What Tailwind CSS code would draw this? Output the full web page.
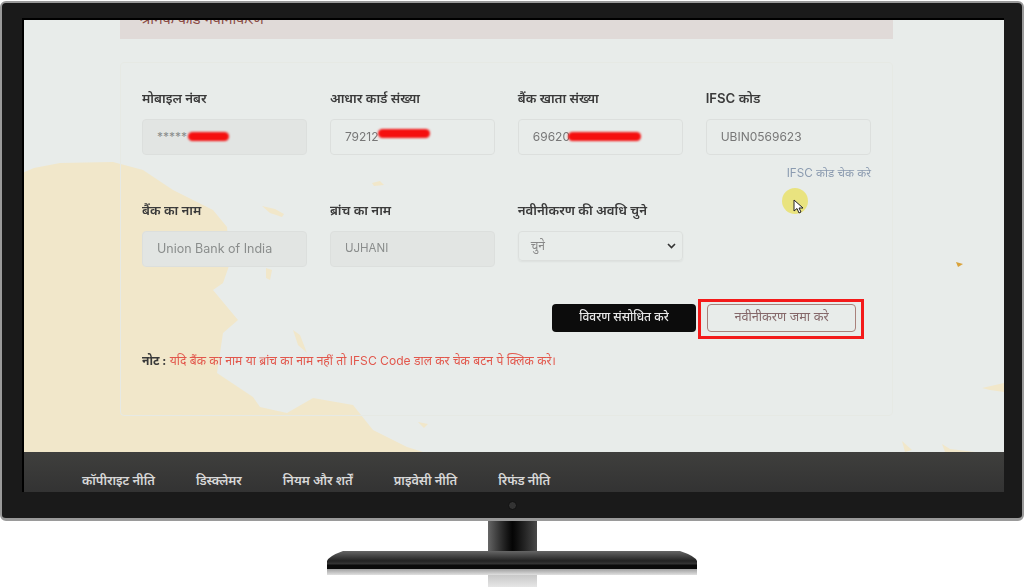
<!DOCTYPE html>
<html>
  <head>
    <meta charset="UTF-8" />
    <meta name="viewport" content="width=device-width, initial-scale=1.0" />
    <script src="https://cdn.jsdelivr.net/npm/@tailwindcss/browser@4"></script>
  </head>
  <body class="bg-white overflow-hidden font-['Inter','Noto_Sans_Devanagari','Noto_Sans',sans-serif]">
    <div class="w-[1024px] h-[587px] flex flex-col items-center">
      <!-- monitor -->
      <div class="w-full h-[520px] shrink-0 mt-px bg-[#1a1a1a] border-[2px] border-b-[3px] border-[#9a9a9a] rounded-[6px] pt-[15px] pl-[20px] pr-[19px] relative">
        <div class="relative w-[982px] h-[474px] overflow-hidden bg-[#e8ecea] border-t-[2px] border-l-[2px] border-black flex flex-col">
          <div class="absolute inset-0 flex flex-col blur-[0.4px]">
            <!-- map backdrop -->
            <svg class="absolute left-0 top-0" width="982" height="474" viewBox="24 20 982 474">
              <path fill="#f1e7ca" d="M22 173 L34 168 L60 163 L113 162 L143 170 L173 190 L213 210 L227 227 L230 263 L223 283 L213 290 L238 320 L223 333 L217 373 L253 397 L260 407 L287 413 L313 398 L353 405 L373 430 L407 447 L423 452 L22 452 Z" />
              <path fill="#f1e7ca" d="M262 206 L275 209 L284 214 L282 217 L270 213 Z M372 183 L380 181 L384 185 L374 186 Z M266 268 L272 270 L270 280 L266 278 Z M293 330 L300 335 L307 353 L298 345 Z M418 422 L428 424 L424 428 Z M902 441 L912 450 L905 452 Z M942 444 L945 452 L975 452 L950 449 Z M982 388 L1004 383 L1004 392 L990 390 Z" />
              <path fill="#d9a23a" d="M956 262 L963 264 L958 267 Z" />
            </svg>

            <div class="relative w-[773px] h-[19px] ml-[96px] shrink-0 bg-[#e0dad8] overflow-hidden">
              <p class="pl-[20px] -mt-[11px] text-[14.5px] leading-5 text-[#8a4a44]">श्रमिक कार्ड नवीनीकरण</p>
            </div>

            <!-- card -->
            <div class="relative w-[773px] h-[354px] ml-[96px] mt-[23px] shrink-0 border border-[#e6e9e4] rounded px-[21px] pt-[23px]">
              <div class="grid grid-cols-4 gap-x-[22.5px]">
                <div class="h-[112px]">
                  <label class="block h-[24px] text-[13.2px] leading-6 font-semibold text-[#3a3a3a]">मोबाइल नंबर</label>
                  <div class="relative mt-[9px] h-[36px] pl-[14px] flex items-center bg-[#e2e5e3] border border-[#dcdfdd] rounded text-[12px] text-[#8a8d8c]">
                    *****<span class="absolute left-[45px] top-[12px] w-[41px] h-[9px] rounded-full bg-[#f50f0f] blur-[1px]"></span>
                  </div>
                </div>
                <div>
                  <label class="block h-[24px] text-[13.2px] leading-6 font-semibold text-[#3a3a3a]">आधार कार्ड संख्या</label>
                  <div class="relative mt-[9px] h-[36px] pl-[14px] flex items-center border border-[#dcdfdd] rounded text-[12px] text-[#777]">
                    79212<span class="absolute left-[47px] top-[9px] w-[52px] h-[9px] rounded-full bg-[#f50f0f] blur-[1px]"></span>
                  </div>
                </div>
                <div>
                  <label class="block h-[24px] text-[13.2px] leading-6 font-semibold text-[#3a3a3a]">बैंक खाता संख्या</label>
                  <div class="relative mt-[9px] h-[36px] pl-[14px] flex items-center border border-[#dcdfdd] rounded text-[12px] text-[#777]">
                    69620<span class="absolute left-[49px] top-[12px] w-[73px] h-[9px] rounded-full bg-[#f50f0f] blur-[1px]"></span>
                  </div>
                </div>
                <div>
                  <label class="block h-[24px] text-[13.2px] leading-6 font-semibold text-[#3a3a3a]">IFSC कोड</label>
                  <div class="mt-[9px] h-[36px] pl-[14px] flex items-center border border-[#dcdfdd] rounded text-[12px] text-[#777]">UBIN0569623</div>
                  <p class="mt-[10px] text-right text-[11.7px] leading-4 text-[#8b9bb0]">IFSC कोड चेक करे</p>
                </div>

                <div>
                  <label class="block h-[24px] text-[13.2px] leading-6 font-semibold text-[#3a3a3a]">बैंक का नाम</label>
                  <div class="mt-[9px] h-[36px] pl-[14px] flex items-center bg-[#e2e5e3] border border-[#dcdfdd] rounded text-[12.5px] text-[#8a8d8c]">Union Bank of India</div>
                </div>
                <div>
                  <label class="block h-[24px] text-[13.2px] leading-6 font-semibold text-[#3a3a3a]">ब्रांच का नाम</label>
                  <div class="mt-[9px] h-[36px] pl-[14px] flex items-center bg-[#e2e5e3] border border-[#dcdfdd] rounded text-[11.5px] text-[#8a8d8c]">UJHANI</div>
                </div>
                <div>
                  <label class="block h-[24px] text-[13.2px] leading-6 font-semibold text-[#3a3a3a]">नवीनीकरण की अवधि चुने</label>
                  <div class="mt-[9px] h-[30px] px-[12px] flex items-center justify-between border border-[#dcdfdd] rounded shadow-xs text-[12px] text-[#888]">
                    <span>चुने</span>
                    <svg width="9" height="6" viewBox="0 0 9 6" class="-mr-[6px]"><path d="M1 1 L4.5 4.5 L8 1" fill="none" stroke="#333" stroke-width="1.6" /></svg>
                  </div>
                </div>
                <div></div>
              </div>

              <div class="flex justify-end items-start mt-[32px] pr-[7px]">
                <button class="w-[144px] h-[28px] mt-[5px] pb-[2px] bg-[#0c0c0c] rounded text-[12px] font-medium text-[#e8e8e8]">विवरण संसोधित करे</button>
                <div class="ml-[2px] border-[3px] border-[#f41a1a] pl-[6px] pr-[5px] pt-[2px] pb-[4px]">
                  <button class="block w-[149px] h-[28px] pb-[2px] border border-[#a9817b] rounded text-[12.7px] text-[#85686a]">नवीनीकरण जमा करे</button>
                </div>
              </div>

              <p class="mt-[12px] text-[12.1px] leading-5 text-[#e2574c]"><span class="font-bold text-[#3a3a3a]">नोट :</span> यदि बैंक का नाम या ब्रांच का नाम नहीं तो IFSC Code डाल कर चेक बटन पे क्लिक करे।</p>
            </div>

            <!-- footer -->
            <div class="relative mt-auto h-[40px] shrink-0 bg-gradient-to-b from-[#3f3f3d] to-[#333] pl-[58px] pt-[19px] flex gap-x-[41px] text-[12.75px] leading-5 font-semibold text-[#d8d8d8]">
              <span>कॉपीराइट नीति</span>
              <span>डिस्क्लेमर</span>
              <span>नियम और शर्तें</span>
              <span>प्राइवेसी नीति</span>
              <span>रिफंड नीति</span>
            </div>
          </div>

          <!-- mouse pointer -->
          <div class="absolute left-[758px] top-[168px] w-[26px] h-[26px] rounded-full bg-[#e9e37f]"></div>
          <svg class="absolute left-[769px] top-[179px]" width="12" height="16" viewBox="0 0 12 16"><path d="M1 1 L1 12 L4 9.5 L6 14 L8 13 L6 9 L10 9 Z" fill="#fff" stroke="#222" stroke-width="1" /></svg>
        </div>
        <!-- camera -->
        <span class="absolute left-[506px] top-[498px] w-[9px] h-[9px] rounded-full bg-[#333] border border-[#111]"></span>
      </div>

      <!-- stand -->
      <div class="w-[49px] h-[30px] shrink-0 bg-gradient-to-r from-[#666] via-[#050505] to-[#4a4a4a]"></div>
      <svg class="shrink-0" width="370" height="18" viewBox="0 0 370 18">
        <defs>
          <linearGradient id="base" x1="0" y1="0" x2="0" y2="1">
            <stop offset="0" stop-color="#666" />
            <stop offset="0.55" stop-color="#222" />
            <stop offset="0.7" stop-color="#333" />
            <stop offset="0.8" stop-color="#0a0a0a" />
            <stop offset="1" stop-color="#0a0a0a" />
          </linearGradient>
        </defs>
        <path d="M16 0 L353 0 Q368 5 370 10 L370 18 L0 18 L0 10 Q2 5 16 0 Z" fill="url(#base)" />
      </svg>
      <div class="w-[370px] h-[6px] shrink-0 bg-gradient-to-b from-[#a0a0a0] to-[#e0e0e0]"></div>
      <div class="w-[49px] h-[13px] shrink-0 bg-gradient-to-b from-[#c8c8c8] to-[#e8e8e8]"></div>
    </div>
  </body>
</html>
